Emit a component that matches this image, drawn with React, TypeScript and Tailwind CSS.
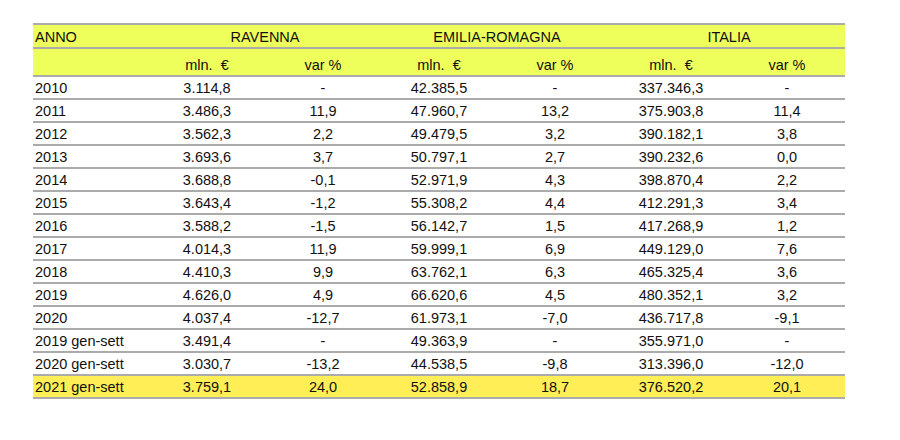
import React from "react";

// dati della tabella: anno, ravenna (mln, var), emilia-romagna (mln, var), italia (mln, var)
type Row = [string, string, string, string, string, string, string];

const rows: Row[] = [
  ["2010", "3.114,8", "-", "42.385,5", "-", "337.346,3", "-"],
  ["2011", "3.486,3", "11,9", "47.960,7", "13,2", "375.903,8", "11,4"],
  ["2012", "3.562,3", "2,2", "49.479,5", "3,2", "390.182,1", "3,8"],
  ["2013", "3.693,6", "3,7", "50.797,1", "2,7", "390.232,6", "0,0"],
  ["2014", "3.688,8", "-0,1", "52.971,9", "4,3", "398.870,4", "2,2"],
  ["2015", "3.643,4", "-1,2", "55.308,2", "4,4", "412.291,3", "3,4"],
  ["2016", "3.588,2", "-1,5", "56.142,7", "1,5", "417.268,9", "1,2"],
  ["2017", "4.014,3", "11,9", "59.999,1", "6,9", "449.129,0", "7,6"],
  ["2018", "4.410,3", "9,9", "63.762,1", "6,3", "465.325,4", "3,6"],
  ["2019", "4.626,0", "4,9", "66.620,6", "4,5", "480.352,1", "3,2"],
  ["2020", "4.037,4", "-12,7", "61.973,1", "-7,0", "436.717,8", "-9,1"],
  ["2019 gen-sett", "3.491,4", "-", "49.363,9", "-", "355.971,0", "-"],
  ["2020 gen-sett", "3.030,7", "-13,2", "44.538,5", "-9,8", "313.396,0", "-12,0"],
];

const last: Row = ["2021 gen-sett", "3.759,1", "24,0", "52.858,9", "18,7", "376.520,2", "20,1"];

const grid = "grid grid-cols-[repeat(7,116px)] border-b-2 border-[#ababab]";

function DataRow({ row, highlight }: { row: Row; highlight?: boolean }) {
  return (
    <div className={`${grid} h-[23px] items-center pt-[1px] ${highlight ? "bg-[#ffee55]" : ""}`}>
      <div className="pl-[2px]">{row[0]}</div>
      {row.slice(1).map((cell, i) => (
        <div key={i} className="text-center">
          {cell}
        </div>
      ))}
    </div>
  );
}

export default function App() {
  return (
    <div className="w-[900px] h-[440px] bg-white pt-[23px] pl-[33px] text-[14.5px] leading-none text-[#111] font-['Liberation_Sans',Arial,sans-serif]">
      <div className="w-[812px] border-t-2 border-[#ababab]">
        {/* intestazione */}
        <div className={`${grid} h-[24px] items-center pt-[2px] bg-[#eeff5c]`}>
          <div className="pl-[2px]">ANNO</div>
          <div className="col-span-2 text-center">RAVENNA</div>
          <div className="col-span-2 text-center">EMILIA-ROMAGNA</div>
          <div className="col-span-2 text-center">ITALIA</div>
        </div>
        <div className={`${grid} h-[28px] items-end pb-[3px] bg-[#eeff5c]`}>
          <div></div>
          {["mln.  €", "var %", "mln.  €", "var %", "mln.  €", "var %"].map((h, i) => (
            <div key={i} className="text-center whitespace-pre">
              {h}
            </div>
          ))}
        </div>
        {rows.map((r) => (
          <DataRow key={r[0]} row={r} />
        ))}
        <DataRow row={last} highlight />
      </div>
    </div>
  );
}
